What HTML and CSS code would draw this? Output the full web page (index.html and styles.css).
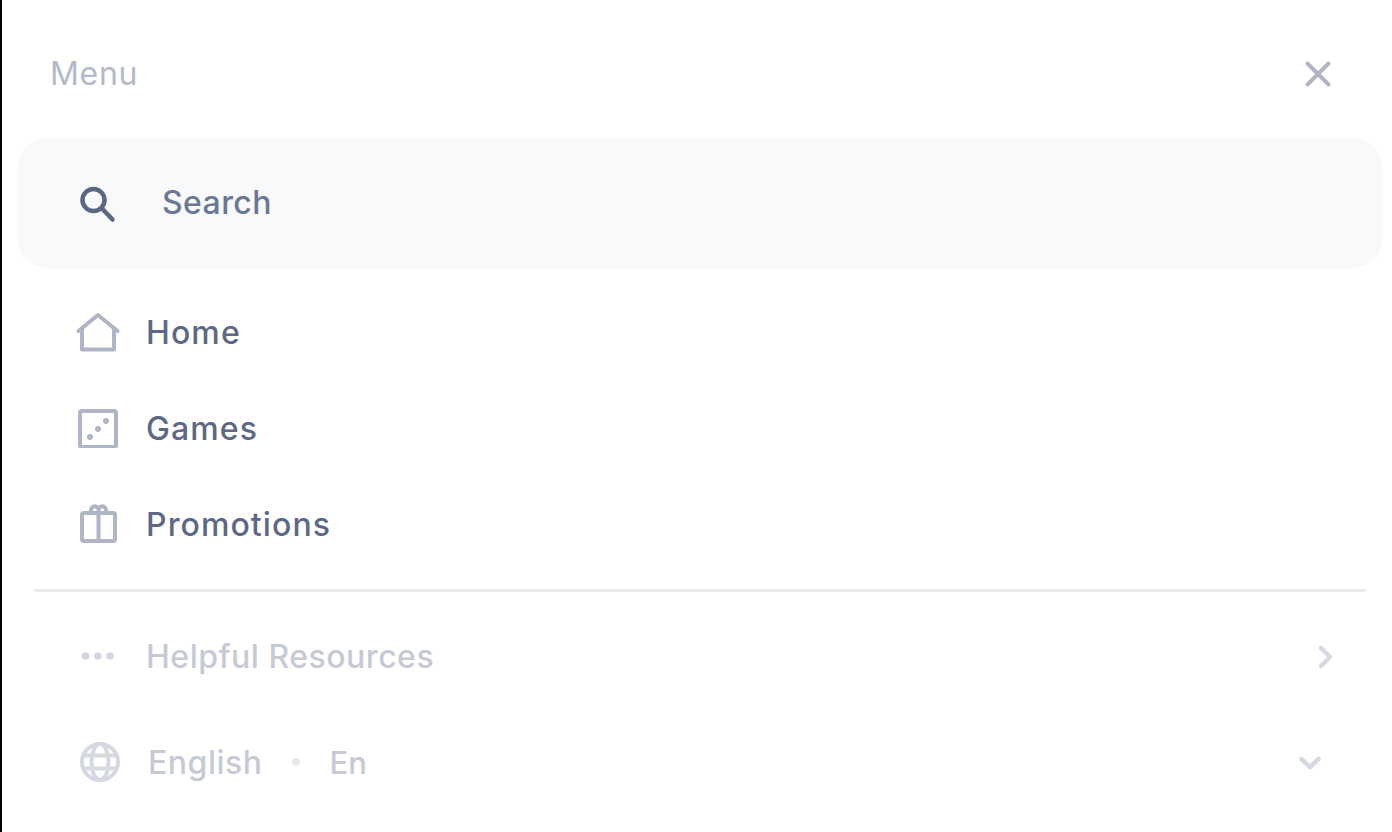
FILE: index.html
```html
<!DOCTYPE html>
<html lang="en">
<head>
    <meta charset="UTF-8">
    <meta name="viewport" content="width=device-width, initial-scale=1.0">
    <title>Menu</title>
    <link rel="stylesheet" href="styles.css">
</head>
<body>
    <div class="menu">
        <div class="menu-header">
            <span class="menu-title">Menu</span>
            <svg class="close-icon" width="32" height="32" viewBox="0 0 32 32"><path d="M4 4l24 24M28 4L4 28"/></svg>
        </div>

        <div class="search">
            <svg class="search-icon" width="40" height="40" viewBox="0 0 40 40"><circle cx="17.500" cy="17" r="11"/><path d="M25.500 25l11 11.500"/></svg>
            <span class="search-label">Search</span>
        </div>

        <div class="nav">
            <div class="nav-item">
                <svg class="icon" width="44" height="40" viewBox="0 0 44 40"><path d="M2.500 19L22 3 41.500 19"/><path d="M6 18.500V37.500H38V18.500"/></svg>
                <span>Home</span>
            </div>
            <div class="nav-item">
                <svg class="icon" width="44" height="40" viewBox="0 0 44 40"><rect x="4" y="3" width="36" height="36" rx="2"/><circle class="dot" cx="14" cy="29" r="3"/><circle class="dot" cx="22" cy="21" r="3"/><circle class="dot" cx="30" cy="13" r="3"/></svg>
                <span>Games</span>
            </div>
            <div class="nav-item">
                <svg class="icon" width="44" height="40" viewBox="0 0 44 40"><rect x="6" y="9" width="33" height="28" rx="2"/><path d="M22.500 9V37"/><path d="M15 9V6a3.500 3.500 0 0 1 7.500 0a3.500 3.500 0 0 1 7.500 0V9"/></svg>
                <span>Promotions</span>
            </div>
        </div>

        <div class="divider"></div>

        <div class="extra-item resources">
            <svg class="faint-icon" width="44" height="40" viewBox="0 0 44 40"><circle cx="9.500" cy="20" r="3.800"/><circle cx="21.700" cy="20" r="3.800"/><circle cx="34" cy="20" r="3.800"/></svg>
            <span>Helpful Resources</span>
            <svg class="chevron right" width="20" height="28" viewBox="0 0 20 28"><path d="M4 5l9 9-9 9"/></svg>
        </div>

        <div class="extra-item language">
            <svg class="globe" width="44" height="44" viewBox="0 0 44 44"><circle cx="24" cy="22" r="18"/><ellipse cx="24" cy="22" rx="8.500" ry="18"/><path d="M7 15.500H41M7 28.500H41"/></svg>
            <span class="lang-name">English</span>
            <i class="lang-dot"></i>
            <span class="lang-code">En</span>
            <svg class="chevron down" width="28" height="20" viewBox="0 0 28 20"><path d="M5.500 6l8.500 8 8.500-8"/></svg>
        </div>
    </div>
</body>
</html>
```

FILE: styles.css
```css
* { box-sizing: border-box; }
html, body { height: 100%; }
body { margin: 0; background: #fff; font-family: Inter, "Liberation Sans", sans-serif; overflow: hidden; }
svg { display: block; flex: none; fill: none; }

.menu { height: 832px; border-left: 2px solid #000; padding: 48px 10px 0 16px; }

.menu-header { display: flex; align-items: center; justify-content: space-between; height: 52px; padding: 0 32px; margin-bottom: 38px; }
.menu-title { padding-bottom: 1px; font-size: 32px; color: #b3b9c8; letter-spacing: 0.7px; }
.close-icon { width: 28px; height: 28px; margin-right: 18px; stroke: #b0b6c6; stroke-width: 4.500; stroke-linecap: round; }

.search { display: flex; align-items: center; height: 131px; background: #f7f9fb; border-radius: 30px; padding: 0 0 2px 58px; }
.search-icon { stroke: #5a6783; stroke-width: 4.500; stroke-linecap: round; }
.search-label { margin-left: 46px; font-size: 32px; font-weight: 500; color: #6b7794; letter-spacing: 0.4px; }

.nav { padding-top: 15px; }
.nav-item { display: flex; align-items: center; height: 96px; padding-left: 58px; font-size: 32px; font-weight: 500; color: #5c6885; letter-spacing: 1.1px; }
.nav-item span { margin-left: 26px; }
.icon { stroke: #afb5c6; stroke-width: 4; stroke-linecap: round; stroke-linejoin: round; }
.icon .dot { fill: #afb5c6; stroke: none; }

.divider { height: 3px; margin: 17px 16px 0; background: #e9eaee; }

.extra-item { display: flex; align-items: center; padding-left: 58px; font-size: 32px; font-weight: 500; color: #c5cad6; letter-spacing: 0.5px; }
.resources { height: 130px; padding-bottom: 2px; }
.resources span { margin-left: 26px; }
.language { height: 82px; padding-bottom: 2px; }
.lang-name { margin-left: 28px; }
.lang-dot { width: 8px; height: 8px; margin: 0 29px 0 30px; border-radius: 50%; background: #e6e8ed; }
.lang-code { font-size: 31px; letter-spacing: 0; }
.faint-icon { fill: #d3d7e0; }
.globe { stroke: #d5d9e2; stroke-width: 4; }
.chevron { stroke: #d5d9e2; stroke-width: 4.500; stroke-linecap: round; stroke-linejoin: round; }
.chevron.right { margin: 2px 45px 0 auto; }
.chevron.down { margin: 2px 58px 0 auto; }
```
